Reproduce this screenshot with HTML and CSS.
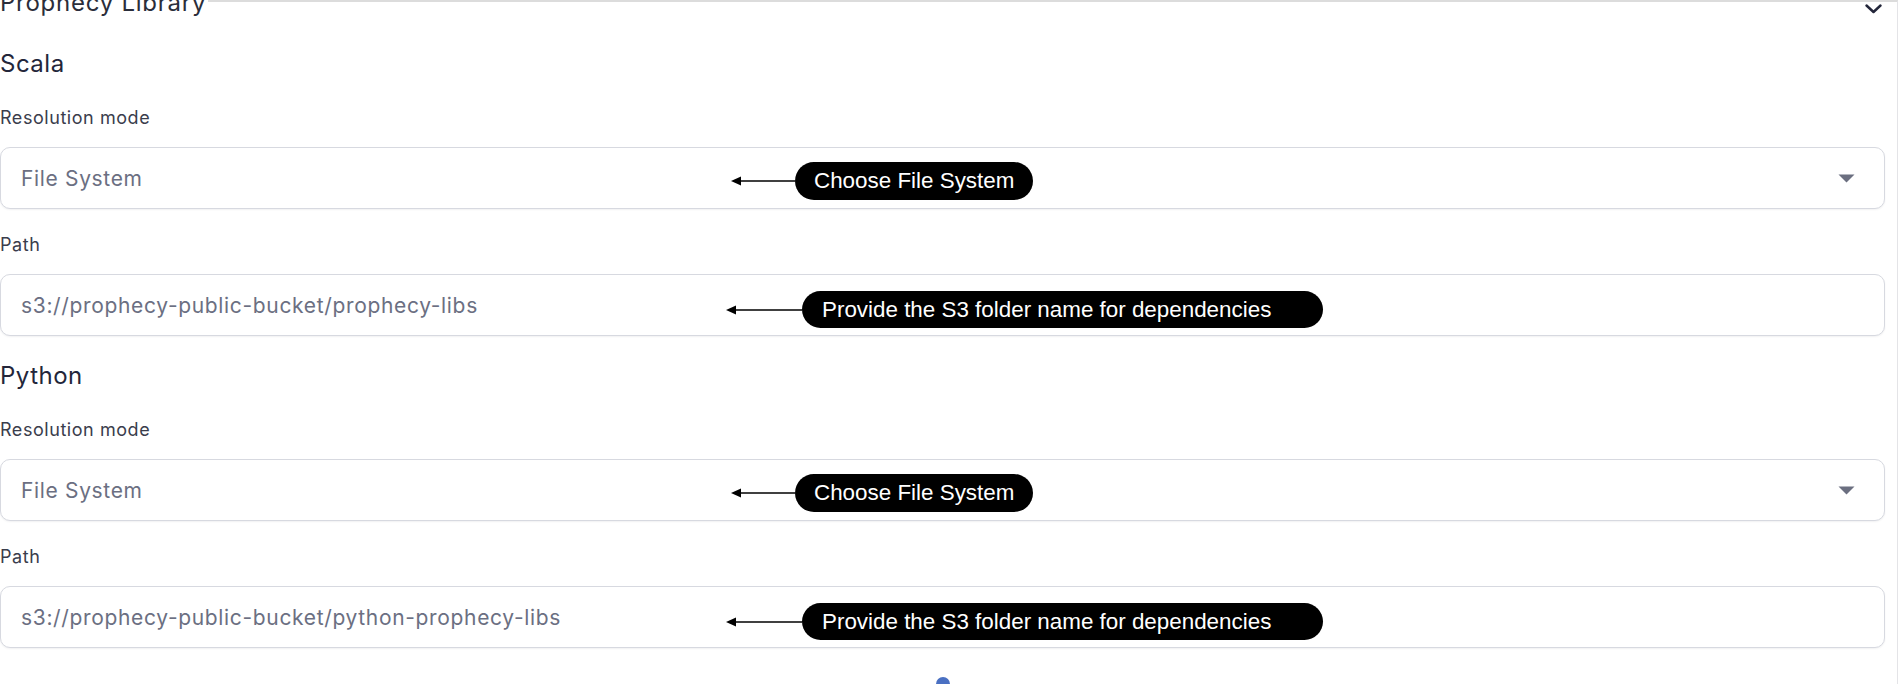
FILE: index.html
```html
<!doctype html>
<html lang="en">
  <head>
    <meta charset="UTF-8" />
    <meta name="viewport" content="width=device-width, initial-scale=1.0" />
    <title>Prophecy Library</title>
    <link rel="stylesheet" href="styles.css">
  </head>
  <body>
    <div class="panel">
      <div class="panel-head">
        <h2 class="panel-title">Prophecy Library</h2>
        <svg class="chevron" width="17" height="10" viewBox="0 0 17 10">
          <path d="M1.5 1.5 L8.5 8 L15.5 1.5" fill="none" stroke="#23263a" stroke-width="2.4" stroke-linecap="round" stroke-linejoin="round"/>
        </svg>
      </div>

      <section class="lang">
        <h3 class="lang-title">Scala</h3>
        <div class="field">
          <div class="field-label">Resolution mode</div>
          <div class="control">
            <span class="value">File System</span>
            <svg class="caret" width="17" height="9" viewBox="0 0 17 9">
              <path d="M0.5 0.5 H16.5 L8.5 8.5 Z" fill="#6b6f80"/>
            </svg>
            <div class="note note-select">
              <svg class="arrow" width="64" height="10" viewBox="0 0 64 10">
                <path d="M0 5 L10 0.5 V9.5 Z" fill="#000"/>
                <path d="M8 5 H64" stroke="#000" stroke-width="1.6"/>
              </svg>
              <span class="pill">Choose File System</span>
            </div>
          </div>
        </div>
        <div class="field">
          <div class="field-label">Path</div>
          <div class="control">
            <span class="value">s3://prophecy-public-bucket/prophecy-libs</span>
            <div class="note note-path">
              <svg class="arrow" width="76" height="10" viewBox="0 0 76 10">
                <path d="M0 5 L10 0.5 V9.5 Z" fill="#000"/>
                <path d="M8 5 H76" stroke="#000" stroke-width="1.6"/>
              </svg>
              <span class="pill pill-wide">Provide the S3 folder name for dependencies</span>
            </div>
          </div>
        </div>
      </section>

      <section class="lang">
        <h3 class="lang-title">Python</h3>
        <div class="field">
          <div class="field-label">Resolution mode</div>
          <div class="control">
            <span class="value">File System</span>
            <svg class="caret" width="17" height="9" viewBox="0 0 17 9">
              <path d="M0.5 0.5 H16.5 L8.5 8.5 Z" fill="#6b6f80"/>
            </svg>
            <div class="note note-select">
              <svg class="arrow" width="64" height="10" viewBox="0 0 64 10">
                <path d="M0 5 L10 0.5 V9.5 Z" fill="#000"/>
                <path d="M8 5 H64" stroke="#000" stroke-width="1.6"/>
              </svg>
              <span class="pill">Choose File System</span>
            </div>
          </div>
        </div>
        <div class="field">
          <div class="field-label">Path</div>
          <div class="control">
            <span class="value">s3://prophecy-public-bucket/python-prophecy-libs</span>
            <div class="note note-path">
              <svg class="arrow" width="76" height="10" viewBox="0 0 76 10">
                <path d="M0 5 L10 0.5 V9.5 Z" fill="#000"/>
                <path d="M8 5 H76" stroke="#000" stroke-width="1.6"/>
              </svg>
              <span class="pill pill-wide">Provide the S3 folder name for dependencies</span>
            </div>
          </div>
        </div>
      </section>

      <div class="loader"><span class="dot"></span></div>
    </div>
  </body>
</html>
```

FILE: styles.css
```css
body {
  margin: 0;
  padding: 0;
  background-color: #ffffff;
  font-family: "Inter", "Noto Sans", sans-serif;
  color: #2a2d3a;
}

.panel {
  width: 1885px;
  padding-right: 12px;
  border-top: 2px solid #dcdcdc;
  border-right: 1px solid #e4e4e7;
  min-height: 700px;
}

.panel-head {
  display: flex;
  justify-content: space-between;
  align-items: flex-start;
  margin-top: -14px;
  padding-right: 3px;
}

.panel-title {
  margin: 0;
  padding-right: 2px;
  font-size: 24px;
  font-weight: 400;
  letter-spacing: 0.75px;
  line-height: 30px;
  background-color: #ffffff;
}

.chevron {
  margin-top: 16px;
}

.lang {
  display: flex;
  flex-direction: column;
}

.lang-title {
  margin: 30px 0 0 0;
  font-size: 24px;
  font-weight: 400;
  letter-spacing: 0.5px;
  line-height: 32px;
  color: #23263a;
}

.lang + .lang .lang-title {
  margin-top: 24px;
}

.field {
  display: flex;
  flex-direction: column;
  gap: 17px;
  margin-top: 24px;
}

.lang-title + .field {
  margin-top: 26px;
}

.field-label {
  font-size: 18px;
  letter-spacing: 0.55px;
  line-height: 24px;
  color: #3a3d4c;
}

.control {
  position: relative;
  display: flex;
  align-items: center;
  justify-content: space-between;
  height: 62px;
  box-sizing: border-box;
  padding: 0 29px 0 20px;
  border: 1.5px solid #d7d9e0;
  border-radius: 10px;
  background-color: #ffffff;
  box-shadow: 0 1px 2px rgba(20, 24, 40, 0.06);
}

.value {
  font-size: 21px;
  letter-spacing: 0.66px;
  color: #6b6f82;
}

.note {
  position: absolute;
  display: flex;
  align-items: center;
}

.note-select {
  left: 730px;
  top: 14px;
}

.note-path {
  left: 725px;
  top: 16px;
}

.arrow {
  display: block;
}

.pill {
  display: flex;
  align-items: center;
  height: 38px;
  padding: 0 19px;
  border-radius: 19px;
  background-color: #000000;
  color: #ffffff;
  font-family: "Liberation Sans", Arial, sans-serif;
  font-size: 22.4px;
}

.pill-wide {
  height: 37px;
  padding: 0 52px 0 20px;
}

.loader {
  display: flex;
  justify-content: center;
  margin-top: 29px;
}

.dot {
  width: 14px;
  height: 14px;
  border-radius: 50%;
  background-color: #4a70c2;
}
```
